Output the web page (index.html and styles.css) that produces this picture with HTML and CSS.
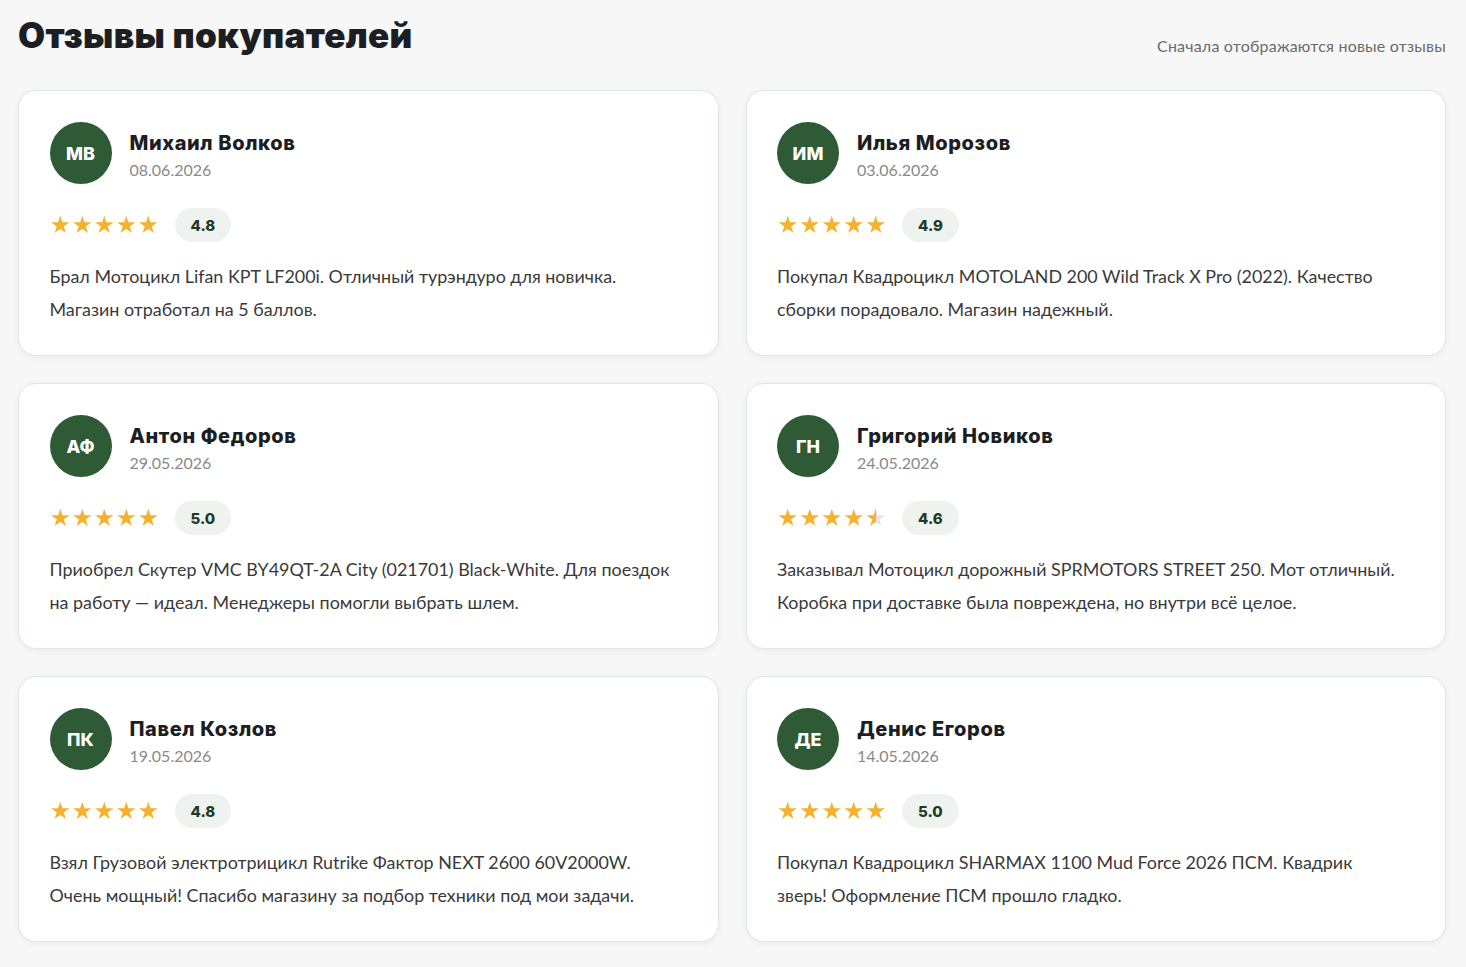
FILE: index.html
```html
<!DOCTYPE html>
<html lang="ru">
<head>
    <meta charset="UTF-8">
    <meta name="viewport" content="width=device-width, initial-scale=1.0">
    <title>Отзывы покупателей</title>
    <link rel="stylesheet" href="styles.css">
</head>
<body>
    <section class="reviews">
        <div class="reviews-head">
            <h1>Отзывы покупателей</h1>
            <span class="reviews-note">Сначала отображаются новые отзывы</span>
        </div>
        <div class="reviews-grid">
            <div class="review">
                <div class="review-author">
                    <div class="avatar">МВ</div>
                    <div>
                        <div class="name">Михаил Волков</div>
                        <div class="date">08.06.2026</div>
                    </div>
                </div>
                <div class="rating">
                    <span class="stars" style="--fill: 100%">★★★★★</span>
                    <span class="score">4.8</span>
                </div>
                <p class="text">Брал Мотоцикл Lifan KPT LF200i. Отличный турэндуро для новичка.<br>Магазин отработал на 5 баллов.</p>
            </div>
            <div class="review">
                <div class="review-author">
                    <div class="avatar">ИМ</div>
                    <div>
                        <div class="name">Илья Морозов</div>
                        <div class="date">03.06.2026</div>
                    </div>
                </div>
                <div class="rating">
                    <span class="stars" style="--fill: 100%">★★★★★</span>
                    <span class="score">4.9</span>
                </div>
                <p class="text">Покупал Квадроцикл MOTOLAND 200 Wild Track X Pro (2022). Качество<br>сборки порадовало. Магазин надежный.</p>
            </div>
            <div class="review">
                <div class="review-author">
                    <div class="avatar">АФ</div>
                    <div>
                        <div class="name">Антон Федоров</div>
                        <div class="date">29.05.2026</div>
                    </div>
                </div>
                <div class="rating">
                    <span class="stars" style="--fill: 100%">★★★★★</span>
                    <span class="score">5.0</span>
                </div>
                <p class="text">Приобрел Скутер VMC BY49QT-2A City (021701) Black-White. Для поездок<br>на работу — идеал. Менеджеры помогли выбрать шлем.</p>
            </div>
            <div class="review">
                <div class="review-author">
                    <div class="avatar">ГН</div>
                    <div>
                        <div class="name">Григорий Новиков</div>
                        <div class="date">24.05.2026</div>
                    </div>
                </div>
                <div class="rating">
                    <span class="stars" style="--fill: 90%">★★★★★</span>
                    <span class="score">4.6</span>
                </div>
                <p class="text">Заказывал Мотоцикл дорожный SPRMOTORS STREET 250. Мот отличный.<br>Коробка при доставке была повреждена, но внутри всё целое.</p>
            </div>
            <div class="review">
                <div class="review-author">
                    <div class="avatar">ПК</div>
                    <div>
                        <div class="name">Павел Козлов</div>
                        <div class="date">19.05.2026</div>
                    </div>
                </div>
                <div class="rating">
                    <span class="stars" style="--fill: 100%">★★★★★</span>
                    <span class="score">4.8</span>
                </div>
                <p class="text">Взял Грузовой электротрицикл Rutrike Фактор NEXT 2600 60V2000W.<br>Очень мощный! Спасибо магазину за подбор техники под мои задачи.</p>
            </div>
            <div class="review">
                <div class="review-author">
                    <div class="avatar">ДЕ</div>
                    <div>
                        <div class="name">Денис Егоров</div>
                        <div class="date">14.05.2026</div>
                    </div>
                </div>
                <div class="rating">
                    <span class="stars" style="--fill: 100%">★★★★★</span>
                    <span class="score">5.0</span>
                </div>
                <p class="text">Покупал Квадроцикл SHARMAX 1100 Mud Force 2026 ПСМ. Квадрик<br>зверь! Оформление ПСМ прошло гладко.</p>
            </div>
        </div>
    </section>
</body>
</html>
```

FILE: styles.css
```css
body {
    margin: 0;
    padding: 0;
    font-family: Lato, "Open Sans", sans-serif;
    background-color: #f6f7f6;
    color: #333;
}
.reviews {
    padding: 14px 20px 24px 18px;
}
.reviews-head {
    display: flex;
    justify-content: space-between;
    align-items: flex-end;
    margin-bottom: 34px;
}
h1 {
    margin: 0;
    font-family: Inter, sans-serif;
    font-size: 35px;
    font-weight: 900;
    letter-spacing: 0.3px;
    color: #1b1e22;
}
.reviews-note {
    font-size: 16px;
    letter-spacing: 0.2px;
    color: #6b6b6b;
    padding-bottom: 1px;
}
.reviews-grid {
    display: grid;
    grid-template-columns: 1fr 1fr;
    gap: 27px;
}
.review {
    background-color: #fff;
    border: 1.5px solid #dde8df;
    border-radius: 18px;
    box-shadow: 0 2px 6px rgba(0, 0, 0, 0.05);
    padding: 31px 30.5px 29px;
}
.review-author {
    display: flex;
    align-items: flex-start;
    gap: 18px;
}
.avatar {
    width: 62px;
    height: 62px;
    flex: none;
    border-radius: 50%;
    background-color: #2e5b35;
    color: #fff;
    display: flex;
    align-items: center;
    justify-content: center;
    font-family: Inter, sans-serif;
    font-weight: 800;
    font-size: 18px;
}
.name {
    font-family: Inter, sans-serif;
    font-weight: 800;
    font-size: 20px;
    letter-spacing: 0.6px;
    color: #1b1e22;
    margin-top: 9px;
}
.date {
    font-size: 16px;
    color: #8a8a8a;
    margin-top: 5px;
}
.rating {
    display: flex;
    align-items: center;
    gap: 15px;
    margin-top: 24px;
}
.stars {
    font-family: "DejaVu Sans", sans-serif;
    font-size: 24px;
    letter-spacing: 0.5px;
    line-height: 1;
    background: linear-gradient(90deg, #f4b22e var(--fill), #e3e3e3 var(--fill));
    -webkit-background-clip: text;
    background-clip: text;
    color: transparent;
}
.score {
    background-color: #eef3ef;
    border-radius: 17px;
    height: 34px;
    padding: 0 16px;
    display: flex;
    align-items: center;
    font-family: Inter, sans-serif;
    font-weight: 800;
    font-size: 15px;
    color: #1f3a25;
}
.text {
    margin: 18px 0 0;
    font-size: 17.9px;
    line-height: 33px;
    color: #3a3a3a;
}
```
